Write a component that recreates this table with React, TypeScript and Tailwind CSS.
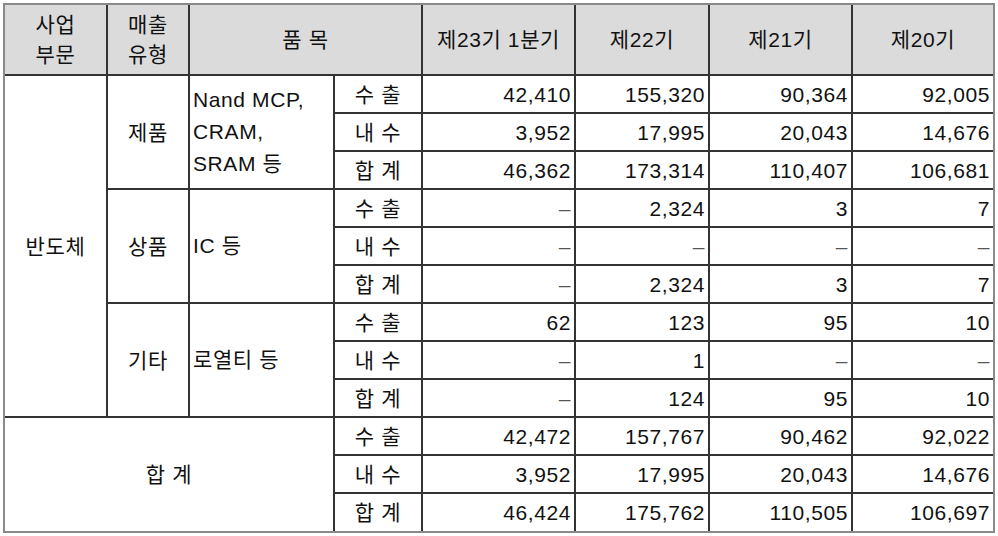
import React from "react";

const B = "border-2 border-[#333]";
const num = `${B} text-right pr-[3px] h-[38px] p-0 align-middle`;
const lab = `${B} text-center h-[38px] p-0 align-middle`;

function Dash() {
  return <span className="text-[#555]">–</span>;
}

function V({ v }: { v: string }) {
  return <td className={num}>{v === "-" ? <Dash /> : v}</td>;
}

const rows: { label: string; vals: string[] }[][] = [
  [
    { label: "수 출", vals: ["42,410", "155,320", "90,364", "92,005"] },
    { label: "내 수", vals: ["3,952", "17,995", "20,043", "14,676"] },
    { label: "합 계", vals: ["46,362", "173,314", "110,407", "106,681"] },
  ],
  [
    { label: "수 출", vals: ["-", "2,324", "3", "7"] },
    { label: "내 수", vals: ["-", "-", "-", "-"] },
    { label: "합 계", vals: ["-", "2,324", "3", "7"] },
  ],
  [
    { label: "수 출", vals: ["62", "123", "95", "10"] },
    { label: "내 수", vals: ["-", "1", "-", "-"] },
    { label: "합 계", vals: ["-", "124", "95", "10"] },
  ],
  [
    { label: "수 출", vals: ["42,472", "157,767", "90,462", "92,022"] },
    { label: "내 수", vals: ["3,952", "17,995", "20,043", "14,676"] },
    { label: "합 계", vals: ["46,424", "175,762", "110,505", "106,697"] },
  ],
];

export default function App() {
  const groups = [
    { type: "제품", item: ["Nand MCP,", "CRAM,", "SRAM 등"] },
    { type: "상품", item: ["IC 등"] },
    { type: "기타", item: ["로열티 등"] },
  ];
  return (
    <div className="w-[998px] h-[536px] bg-white pt-[3px] pl-[3px] font-['Liberation_Sans','Noto_Sans_CJK_KR',sans-serif] text-[21px] tracking-[0.6px] leading-none text-[#111]">
      <div className="w-[992px] border-2 border-[#8a8a8a]">
        <table className="w-[988px] table-fixed border-collapse border-hidden">
          <colgroup>
            <col className="w-[102px]" />
            <col className="w-[82px]" />
            <col className="w-[145px]" />
            <col className="w-[88px]" />
            <col className="w-[153px]" />
            <col className="w-[134px]" />
            <col className="w-[143px]" />
            <col className="w-[141px]" />
          </colgroup>
          <tbody>
            <tr className="bg-[#dbdbdb]">
              <td className={`${B} h-[70px] p-0 text-center align-middle leading-[30px]`}>
                사업
                <br />
                부문
              </td>
              <td className={`${B} h-[70px] p-0 text-center align-middle leading-[30px]`}>
                매출
                <br />
                유형
              </td>
              <td colSpan={2} className={`${B} h-[70px] p-0 text-center align-middle`}>
                품 목
              </td>
              <td className={`${B} h-[70px] p-0 text-center align-middle`}>제23기 1분기</td>
              <td className={`${B} h-[70px] p-0 text-center align-middle`}>제22기</td>
              <td className={`${B} h-[70px] p-0 text-center align-middle`}>제21기</td>
              <td className={`${B} h-[70px] p-0 text-center align-middle`}>제20기</td>
            </tr>
            {groups.map((g, gi) =>
              rows[gi].map((r, ri) => (
                <tr key={`${gi}-${ri}`}>
                  {gi === 0 && ri === 0 && (
                    <td rowSpan={9} className={`${B} p-0 text-center align-middle`}>
                      반도체
                    </td>
                  )}
                  {ri === 0 && (
                    <td rowSpan={3} className={`${B} p-0 text-center align-middle`}>
                      {g.type}
                    </td>
                  )}
                  {ri === 0 && (
                    <td rowSpan={3} className={`${B} p-0 pl-[3px] text-left align-middle leading-[32px]`}>
                      {g.item.map((t, i) => (
                        <div key={i}>{t}</div>
                      ))}
                    </td>
                  )}
                  <td className={lab}>{r.label}</td>
                  {r.vals.map((v, vi) => (
                    <V key={vi} v={v} />
                  ))}
                </tr>
              ))
            )}
            {rows[3].map((r, ri) => (
              <tr key={`t-${ri}`}>
                {ri === 0 && (
                  <td rowSpan={3} colSpan={3} className={`${B} p-0 text-center align-middle`}>
                    합 계
                  </td>
                )}
                <td className={lab}>{r.label}</td>
                {r.vals.map((v, vi) => (
                  <V key={vi} v={v} />
                ))}
              </tr>
            ))}
          </tbody>
        </table>
      </div>
    </div>
  );
}
